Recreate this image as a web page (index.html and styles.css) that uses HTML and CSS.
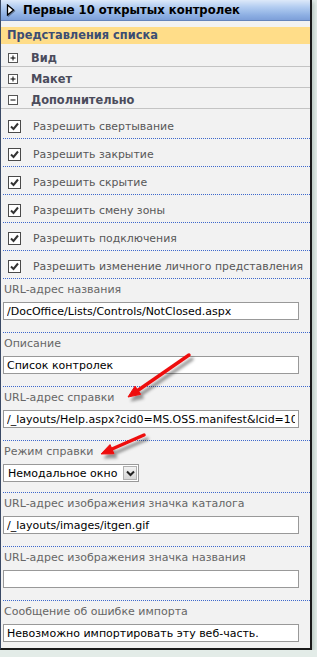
FILE: index.html
```html
<!DOCTYPE html>
<html lang="ru">
<head>
  <meta charset="UTF-8" />
  <title>Свойства веб-части</title>
  <link rel="stylesheet" href="styles.css">
</head>
<body>

  <div class="panel">
    <div class="title">
      <svg class="title-icon" width="9" height="12" viewBox="0 0 9 12">
        <polygon points="1.5,1 7.5,6 1.5,11" fill="#fff" stroke="#000" stroke-width="1.3" />
      </svg>
      Первые 10 открытых контролек
    </div>

    <div class="section">Представления списка</div>

    <div class="groups">
      <div class="group">
        <svg class="toggle" width="10" height="10" viewBox="0 0 10 10">
          <rect x="0.5" y="0.5" width="9" height="9" fill="#fff" stroke="#555" />
          <path d="M2.5 5H7.5M5 2.5V7.5" stroke="#000" />
        </svg>
        Вид
      </div>
      <div class="group">
        <svg class="toggle" width="10" height="10" viewBox="0 0 10 10">
          <rect x="0.5" y="0.5" width="9" height="9" fill="#fff" stroke="#555" />
          <path d="M2.5 5H7.5M5 2.5V7.5" stroke="#000" />
        </svg>
        Макет
      </div>
      <div class="group">
        <svg class="toggle" width="10" height="10" viewBox="0 0 10 10">
          <rect x="0.5" y="0.5" width="9" height="9" fill="#fff" stroke="#555" />
          <path d="M2.5 5H7.5" stroke="#000" />
        </svg>
        Дополнительно
      </div>
    </div>

    <div class="options">
      <div class="opt"><span class="check"><svg width="11" height="11" viewBox="0 0 11 11"><path d="M2 5.5L4.5 8L9 2.5" fill="none" stroke="#333" stroke-width="2" /></svg></span>Разрешить свертывание</div>
      <div class="opt"><span class="check"><svg width="11" height="11" viewBox="0 0 11 11"><path d="M2 5.5L4.5 8L9 2.5" fill="none" stroke="#333" stroke-width="2" /></svg></span>Разрешить закрытие</div>
      <div class="opt"><span class="check"><svg width="11" height="11" viewBox="0 0 11 11"><path d="M2 5.5L4.5 8L9 2.5" fill="none" stroke="#333" stroke-width="2" /></svg></span>Разрешить скрытие</div>
      <div class="opt"><span class="check"><svg width="11" height="11" viewBox="0 0 11 11"><path d="M2 5.5L4.5 8L9 2.5" fill="none" stroke="#333" stroke-width="2" /></svg></span>Разрешить смену зоны</div>
      <div class="opt"><span class="check"><svg width="11" height="11" viewBox="0 0 11 11"><path d="M2 5.5L4.5 8L9 2.5" fill="none" stroke="#333" stroke-width="2" /></svg></span>Разрешить подключения</div>
      <div class="opt"><span class="check"><svg width="11" height="11" viewBox="0 0 11 11"><path d="M2 5.5L4.5 8L9 2.5" fill="none" stroke="#333" stroke-width="2" /></svg></span>Разрешить изменение личного представления</div>
    </div>

    <div class="fields">
      <div class="field">
        <div class="label">URL-адрес названия</div>
        <input class="text" type="text" value="/DocOffice/Lists/Controls/NotClosed.aspx" />
      </div>
      <div class="field">
        <div class="label">Описание</div>
        <input class="text" type="text" value="Список контролек" />
      </div>
      <div class="field">
        <div class="label">URL-адрес справки</div>
        <input class="text" type="text" value="/_layouts/Help.aspx?cid0=MS.OSS.manifest&amp;lcid=1049" />
      </div>
      <div class="field field-select">
        <div class="label">Режим справки</div>
        <div class="select">
          <select class="mode">
            <option>Немодальное окно</option>
          </select>
          <span class="select-btn">
            <svg width="9" height="7" viewBox="0 0 9 7"><path d="M1 1.5L4.5 5L8 1.5" fill="none" stroke="#222" stroke-width="2" /></svg>
          </span>
        </div>
      </div>
      <div class="field">
        <div class="label">URL-адрес изображения значка каталога</div>
        <input class="text" type="text" value="/_layouts/images/itgen.gif" />
      </div>
      <div class="field">
        <div class="label">URL-адрес изображения значка названия</div>
        <input class="text" type="text" value="" />
      </div>
      <div class="field field-last">
        <div class="label">Сообщение об ошибке импорта</div>
        <input class="text" type="text" value="Невозможно импортировать эту веб-часть." />
      </div>
    </div>

    <!-- красные стрелки поверх формы -->
    <svg class="arrows" width="310" height="650" viewBox="0 0 310 650">
      <defs>
        <filter id="shadow" x="-20%" y="-20%" width="150%" height="160%">
          <feDropShadow dx="3" dy="4" stdDeviation="1.6" flood-color="#000" flood-opacity="0.4" />
        </filter>
      </defs>
      <g filter="url(#shadow)" fill="#ee1111" stroke="#ee1111">
        <line x1="188" y1="355" x2="136" y2="391" stroke-width="3.5" stroke-linecap="round" />
        <polygon points="127,397 139.7,394.3 134,386.1" stroke-width="1" stroke-linejoin="round" />
        <line x1="143" y1="435" x2="111" y2="449" stroke-width="3.5" stroke-linecap="round" />
        <polygon points="100,454 113,453.7 109,444.6" stroke-width="1" stroke-linejoin="round" />
      </g>
    </svg>
  </div>

</body>
</html>
```

FILE: styles.css
```css
body {
    margin: 0;
    background-color: #e3ece8;
    font-family: Verdana, "DejaVu Sans", sans-serif;
    font-size: 11px;
}
.panel {
    position: relative;
    width: 309px;
    background: #f2f2f2;
    border-left: 1px solid #3a4a66;
    border-right: 2px solid #1a1a1a;
    border-bottom: 2px solid #1a1a1a;
    box-shadow: 2px 2px 4px rgba(60, 90, 80, 0.25);
}
.title {
    display: flex;
    align-items: center;
    gap: 8px;
    height: 20px;
    padding-left: 5px;
    background: linear-gradient(to bottom, #dde9f9 0%, #b3cdf1 35%, #8eb0e3 75%, #7d9fd9 100%);
    border-bottom: 1px solid #6584bb;
    font-weight: bold;
    font-size: 11.6px;
    color: #000;
}
.title-icon {
    filter: drop-shadow(1px 1px 0 rgba(0,0,0,0.35));
}
.section {
    margin-top: 6px;
    height: 17px;
    line-height: 17px;
    padding-left: 6px;
    background: #ffdd89;
    font-weight: bold;
    font-size: 11.4px;
    color: #3c4d73;
}
.groups {
    margin-top: 2px;
}
.group {
    display: flex;
    align-items: center;
    gap: 13px;
    height: 16px;
    padding: 4px 0 0 7px;
    border-bottom: 1px solid #c4c4c4;
    font-weight: bold;
    font-size: 11.4px;
    color: #4b4c5c;
}
.options {
    margin-left: 2px;
    padding-top: 2px;
}
.opt {
    display: flex;
    align-items: center;
    gap: 12px;
    height: 23px;
    padding: 4px 0 0 5px;
    border-bottom: 1px dotted #3d68cc;
    color: #575757;
    font-size: 10.9px;
}
.check {
    display: flex;
    align-items: center;
    justify-content: center;
    width: 11px;
    height: 11px;
    background: #fff;
    border: 1px solid #4a4a4a;
}
.fields {
    margin-left: 2px;
}
.field {
    padding: 3px 0 12px;
    border-bottom: 1px dotted #3d68cc;
}
.field-select {
    padding-bottom: 10px;
}
.field-last {
    padding-bottom: 6px;
    border-bottom: none;
}
.label {
    height: 15px;
    line-height: 15px;
    margin-bottom: 5px;
    padding-left: 1px;
    color: #666;
}
.text {
    display: block;
    box-sizing: border-box;
    width: 296px;
    height: 18px;
    margin: 0;
    padding: 0 3px;
    border: 1px solid #999;
    background: #fff;
    font-family: Verdana, "DejaVu Sans", sans-serif;
    font-size: 11px;
    color: #000;
    outline: none;
}
.select {
    display: flex;
    box-sizing: border-box;
    width: 136px;
    height: 18px;
    border: 1px solid #999;
    background: #fff;
}
.mode {
    flex: 1;
    appearance: none;
    margin: 0;
    padding: 0 0 0 4px;
    border: none;
    background: transparent;
    font-family: Verdana, "DejaVu Sans", sans-serif;
    font-size: 11px;
    color: #000;
    outline: none;
}
.select-btn {
    display: flex;
    align-items: center;
    justify-content: center;
    width: 14px;
    margin: 1px;
    background: linear-gradient(to bottom, #f2f2f2, #d6d6d6);
    border: 1px solid #b0b0b0;
    box-sizing: border-box;
}
.arrows {
    position: absolute;
    left: 0;
    top: 0;
    pointer-events: none;
}
```
